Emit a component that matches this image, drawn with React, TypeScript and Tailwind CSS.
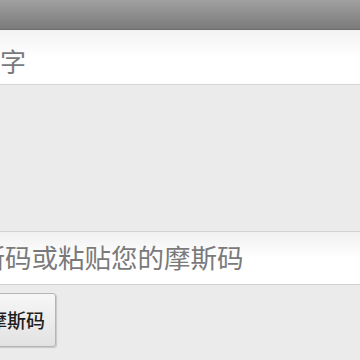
export default function App() {
  return (
    <div
      className="flex h-[360px] w-[360px] flex-col overflow-hidden bg-[#ebebeb]"
      style={{ fontFamily: '"Noto Sans CJK SC", "Noto Sans", sans-serif' }}
    >
      {/* title bar */}
      <div className="h-[30px] shrink-0 border-b border-[#6f6f6f] bg-gradient-to-b from-[#a0a0a0] to-[#7b7b7b]" />

      {/* text input */}
      <div className="h-[55px] shrink-0 border-b border-[#d6d6d6] bg-gradient-to-b from-[#f2f2f2] via-white to-white pt-[18px]">
        <div className="ml-[-104px] whitespace-nowrap text-[26px] leading-[26px] text-[#7a7a7a]">
          请输入文字
        </div>
      </div>

      <div className="h-[146px] shrink-0" />

      {/* morse input */}
      <div className="h-[54px] shrink-0 border-y border-[#d2d2d2] bg-gradient-to-b from-[#f0f0f0] via-white to-white pt-[12px]">
        <div className="ml-[-101px] whitespace-nowrap text-[26.5px] leading-[26px] text-[#7a7a7a]">
          输入摩斯码或粘贴您的摩斯码
        </div>
      </div>

      <div className="mt-[8px] flex">
        <button className="ml-[-80px] flex h-[54px] items-center whitespace-nowrap rounded-[3px] border border-[#b5b5b5] bg-gradient-to-b from-[#f7f7f7] to-[#e2e2e2] px-[10px] text-[19px] font-medium text-[#1e1e1e] shadow-[1px_1px_1px_rgba(0,0,0,0.15)]">
          转换为摩斯码
        </button>
      </div>
    </div>
  );
}
